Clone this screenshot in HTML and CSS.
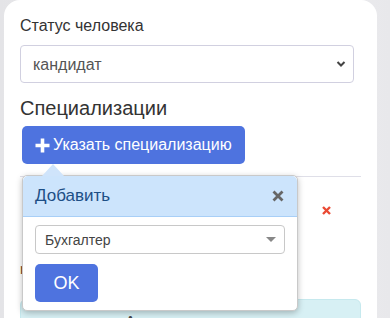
FILE: index.html
```html
<!DOCTYPE html>
<html lang="ru">
<head>
  <meta charset="UTF-8" />
  <meta name="viewport" content="width=device-width, initial-scale=1.0"/>
  <title>Статус человека</title>
  <link rel="stylesheet" href="styles.css">
</head>
<body>

  <div class="card">
    <label class="field-label" for="status">Статус человека</label>
    <select id="status" class="status-select">
      <option>кандидат</option>
    </select>

    <h2 class="section-title">Специализации</h2>

    <div class="spec-block">
      <button class="btn-add">
        <svg class="plus" width="15" height="15" viewBox="0 0 15 15"><path d="M7.5 0.5v14M0.5 7.5h14" stroke="#fff" stroke-width="3.6"/></svg>
        Указать специализацию
      </button>

      <div class="spec-list">
        <div class="spec-row">
          <span class="spec-name">r</span>
          <svg class="spec-remove" width="9" height="9" viewBox="0 0 9 9"><path d="M1 1l7 7M8 1l-7 7" stroke="#ea4a34" stroke-width="2.4"/></svg>
        </div>
      </div>

      <div class="info-box">
        <span class="info-icon">&#9679;</span>
      </div>

      <div class="popover">
        <div class="popover-arrow"></div>
        <div class="popover-head">
          <span>Добавить</span>
          <svg class="popover-close" width="12" height="12" viewBox="0 0 12 12"><path d="M1.5 1.5l9 9M10.5 1.5l-9 9" stroke="#666" stroke-width="2.8"/></svg>
        </div>
        <div class="popover-body">
          <div class="fake-select">
            <span>Бухгалтер</span>
            <span class="caret"></span>
          </div>
          <button class="btn-ok">OK</button>
        </div>
      </div>
    </div>
  </div>

</body>
</html>
```

FILE: styles.css
```css
body {
  margin: 0;
  font-family: "Liberation Sans", Arial, sans-serif;
  background: linear-gradient(90deg, #e4e4e7 0%, #f1f1f3 60%, #e8e8eb 100%);
  height: 318px;
  overflow: hidden;
}
.card {
  background: #fff;
  margin-left: 4px;
  width: 373px;
  height: 330px;
  border-radius: 16px 16px 0 0;
  padding: 17px 16px 0 16px;
  box-sizing: border-box;
}
.field-label {
  display: block;
  font-size: 16px;
  color: #333;
  margin-bottom: 10px;
}
.status-select {
  width: 334px;
  height: 38px;
  border: 1px solid #d1d0e0;
  border-radius: 4px;
  background: #fff;
  font-family: inherit;
  font-size: 16px;
  color: #555;
  padding: 0 12px;
  appearance: none;
  background-image: url("data:image/svg+xml,%3Csvg xmlns='http://www.w3.org/2000/svg' width='10' height='8' viewBox='0 0 10 8'%3E%3Cpath d='M1.5 2l3.5 3.5 3.5-3.5' fill='none' stroke='%23444' stroke-width='2'/%3E%3C/svg%3E");
  background-repeat: no-repeat;
  background-position: right 7px center;
}
.section-title {
  font-size: 20px;
  font-weight: normal;
  color: #333;
  margin: 14px 0 6px 0;
}
.spec-block {
  position: relative;
}
.btn-add {
  display: flex;
  align-items: center;
  gap: 3px;
  margin-left: 2px;
  height: 38px;
  padding: 0 13px 0 13px;
  border: none;
  border-radius: 5px;
  background: #4e73df;
  color: #fff;
  font-family: inherit;
  font-size: 16px;
}
.spec-list {
  margin-top: 12px;
  border-top: 1px solid #dfdfe8;
  width: 341px;
}
.spec-row {
  height: 90px;
  position: relative;
}
.spec-name {
  position: absolute;
  left: 0;
  top: 84px;
  color: #7a4a1a;
  font-size: 14px;
}
.spec-remove {
  position: absolute;
  left: 302px;
  top: 29px;
}
.info-box {
  margin-top: 32px;
  width: 341px;
  height: 40px;
  background: #d7f0f4;
  border: 1px solid #c6e9ee;
  border-radius: 6px;
  box-sizing: border-box;
  text-align: center;
}
.info-icon {
  color: #444;
  font-size: 8px;
  position: relative;
  top: 6px;
  left: -60px;
}
.popover {
  position: absolute;
  left: 2px;
  top: 49px;
  width: 274px;
  background: #fff;
  border: 1px solid #c9c9c9;
  border-radius: 5px;
  box-shadow: 0 2px 6px rgba(0,0,0,0.25);
}
.popover-arrow {
  position: absolute;
  left: 19px;
  top: -12px;
  width: 0;
  height: 0;
  border-left: 11px solid transparent;
  border-right: 11px solid transparent;
  border-bottom: 12px solid #cfe4fb;
}
.popover-head {
  display: flex;
  justify-content: space-between;
  align-items: center;
  height: 40px;
  padding: 0 13px 0 12px;
  background: #cce4fc;
  border-bottom: 1px solid #a8cff7;
  border-radius: 5px 5px 0 0;
  color: #1d4f86;
  font-size: 17px;
}
.popover-body {
  padding: 8px 12px 8px 12px;
}
.fake-select {
  display: flex;
  justify-content: space-between;
  align-items: center;
  height: 27px;
  border: 1px solid #c8c8c8;
  border-radius: 4px;
  padding: 0 8px 0 9px;
  font-size: 14px;
  color: #444;
}
.caret {
  width: 0;
  height: 0;
  border-left: 5px solid transparent;
  border-right: 5px solid transparent;
  border-top: 5px solid #888;
}
.btn-ok {
  margin-top: 10px;
  width: 63px;
  height: 38px;
  border: none;
  border-radius: 5px;
  background: #4e73df;
  color: #fff;
  font-family: inherit;
  font-size: 18px;
}
```
